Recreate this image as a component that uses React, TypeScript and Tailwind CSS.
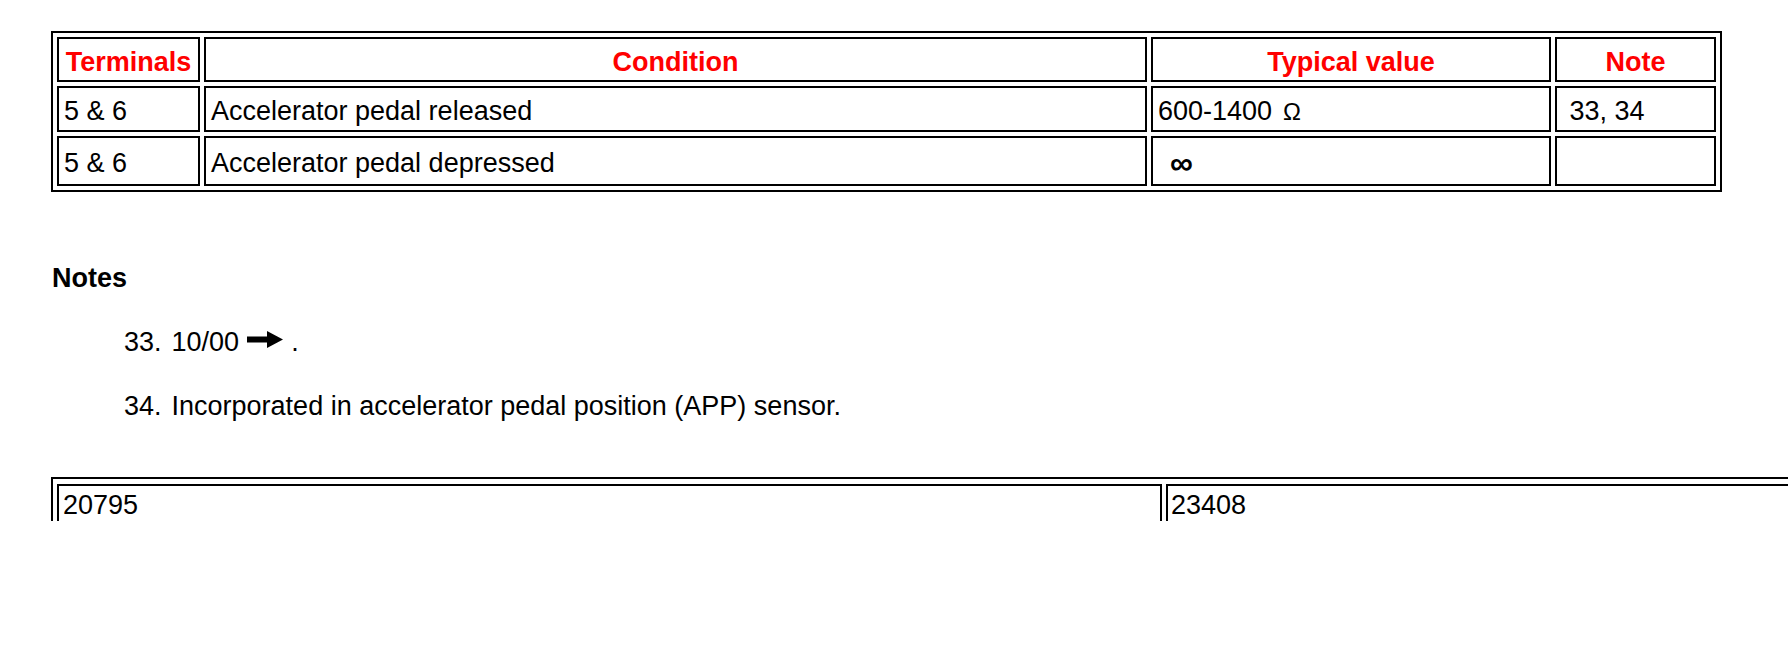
import React from "react";

function Arrow() {
  return (
    <svg width="36" height="17" viewBox="0 0 36 17" className="inline-block mb-[7px]">
      <polygon points="0,5.5 20,5.5 20,0 36,8.5 20,17 20,11.5 0,11.5" fill="#000" />
    </svg>
  );
}

export default function App() {
  const cell =
    "border-2 border-black flex items-center pt-[5px] px-[5px] leading-[31px] whitespace-nowrap";
  const head = cell + " justify-center text-[#ff0000] font-bold";
  return (
    <div className="w-[1788px] h-[670px] overflow-hidden bg-white text-black font-['Liberation_Sans',Arial,sans-serif] text-[27px]">
      <div className="pl-[51px] pt-[31px]">
        <div className="w-[1671px] border-2 border-black p-[4px] grid grid-cols-[143px_943px_400px_161px] grid-rows-[45px_46px_50px] gap-[4px]">
          <div className={head}>Terminals</div>
          <div className={head}>Condition</div>
          <div className={head}>Typical value</div>
          <div className={head}>Note</div>

          <div className={cell}>5 &amp; 6</div>
          <div className={cell}>Accelerator pedal released</div>
          <div className={cell}>
            <span>600-1400</span>
            <span className="ml-[11px] text-[24px]">Ω</span>
          </div>
          <div className={cell}>&nbsp;33, 34</div>

          <div className={cell}>5 &amp; 6</div>
          <div className={cell}>Accelerator pedal depressed</div>
          <div className={cell}>
            <span className="ml-[12px] font-bold text-[32px]">∞</span>
          </div>
          <div className={cell}></div>
        </div>
      </div>

      <div className="pl-[52px] mt-[71px] leading-[31px] font-bold">Notes</div>

      <div className="pl-[124px] mt-[33px] leading-[31px] flex items-center whitespace-nowrap">
        <span>33.</span>
        <span className="ml-[10px]">10/00</span>
        <span className="ml-[8px] flex items-center">
          <Arrow />
        </span>
        <span className="ml-[8px]">.</span>
      </div>
      <div className="pl-[124px] mt-[33px] leading-[31px] flex whitespace-nowrap">
        <span>34.</span>
        <span className="ml-[10px]">Incorporated in accelerator pedal position (APP) sensor.</span>
      </div>

      <div className="ml-[51px] mt-[55px] w-[2300px] h-[44px] border-t-2 border-l-2 border-black pt-[5px] pl-[4px] flex gap-[4px]">
        <div className="w-[1105px] h-full border-t-2 border-l-2 border-r-2 border-black pl-[4px] pt-[4px] leading-[31px]">
          20795
        </div>
        <div className="flex-1 h-full border-t-2 border-l-2 border-black pl-[3px] pt-[4px] leading-[31px]">
          23408
        </div>
      </div>
    </div>
  );
}
